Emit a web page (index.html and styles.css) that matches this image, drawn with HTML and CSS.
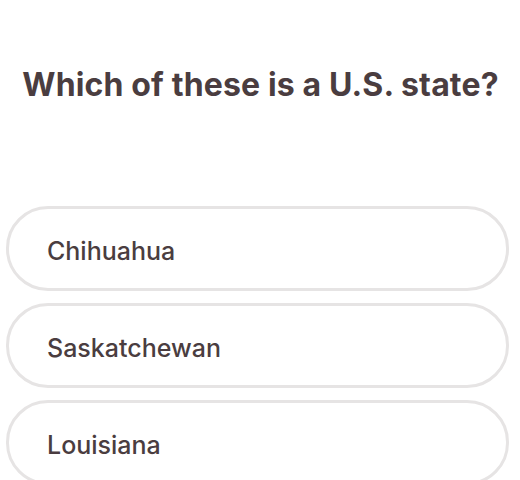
FILE: index.html
```html
<!DOCTYPE html>
<html>
<head>
<meta charset="utf-8">
<link rel="stylesheet" href="styles.css">
</head>
<body>
<main class="quiz">
  <h1 class="question">Which of these is a U.S. state?</h1>
  <ul class="options">
    <li class="option">Chihuahua</li>
    <li class="option">Saskatchewan</li>
    <li class="option">Louisiana</li>
  </ul>
</main>
</body>
</html>
```
FILE: styles.css
```css
html, body {
  margin: 0;
  padding: 0;
  background: #ffffff;
}
body {
  width: 520px;
  height: 480px;
  overflow: hidden;
  font-family: "Inter", "Liberation Sans", sans-serif;
  color: #4a3d40;
}
.quiz {
  padding: 0 11px 0 6px;
}
.question {
  margin: 0 -6px 0 0;
  padding-top: 65px;
  font-size: 32px;
  font-weight: 700;
  line-height: 40px;
  text-align: center;
  letter-spacing: 0.15px;
}
.options {
  list-style: none;
  margin: 101px 0 0;
  padding: 0;
  display: flex;
  flex-direction: column;
  gap: 12px;
}
.option {
  box-sizing: border-box;
  height: 85px;
  border: 3px solid #e6e4e4;
  border-radius: 42px;
  display: flex;
  align-items: center;
  padding: 4px 0 0 38px;
  font-size: 25px;
  font-weight: 500;
  letter-spacing: 0;
}
```
